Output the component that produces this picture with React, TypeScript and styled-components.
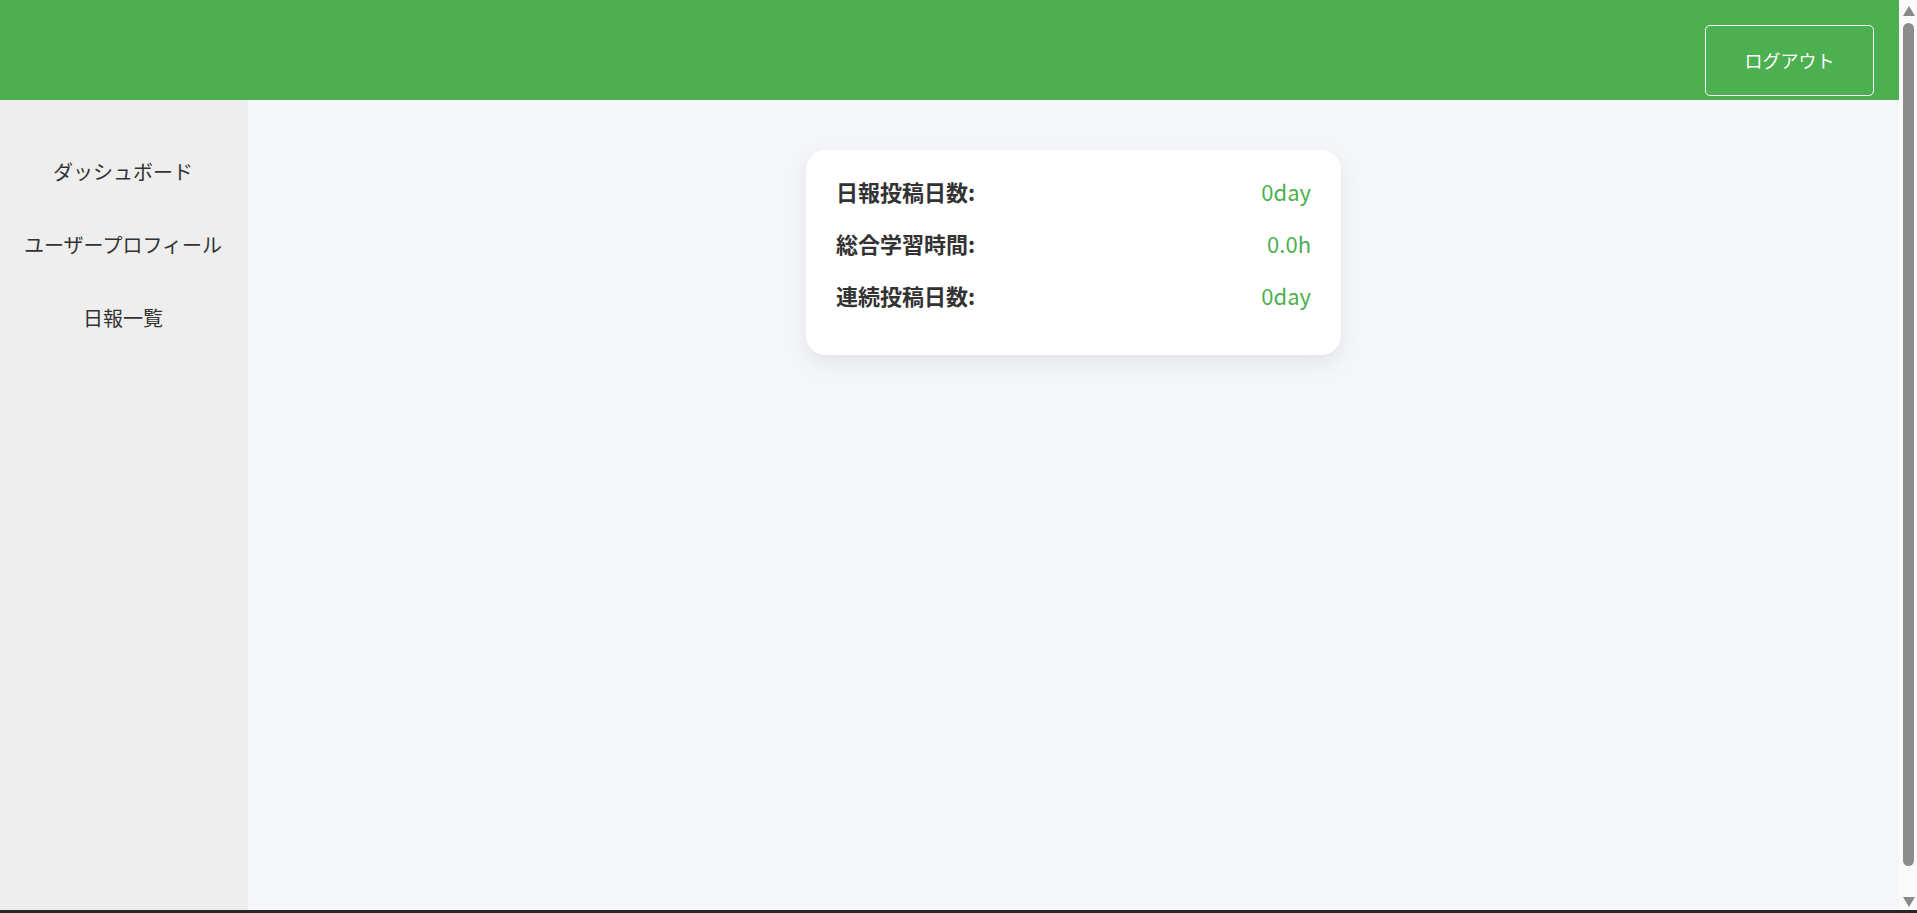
import React from "react";
import styled, { createGlobalStyle } from "styled-components";

const GlobalStyle = createGlobalStyle`
  html, body {
    margin: 0;
    padding: 0;
    height: 100%;
    overflow: hidden;
  }
  body {
    font-family: "Noto Sans CJK JP", "Noto Sans", sans-serif;
    color: #333;
  }
  * { box-sizing: border-box; }
`;

const Frame = styled.div`
  height: 100vh;
  display: flex;
  flex-direction: column;
  border-bottom: 3px solid #262626;
`;

const Window = styled.div`
  flex: 1;
  min-height: 0;
  display: flex;
`;

const Content = styled.div`
  flex: 1;
  min-width: 0;
  overflow: hidden;
  display: flex;
  flex-direction: column;
`;

const Rail = styled.div`
  width: 18px;
  flex-shrink: 0;
  background: #fafafa;
  display: flex;
  flex-direction: column;
  align-items: center;
  padding: 6px 0 3px 1px;
`;

const Arrow = styled.div<{ $down?: boolean }>`
  width: 0;
  height: 0;
  border-left: 6.5px solid transparent;
  border-right: 6.5px solid transparent;
  ${(p) =>
    p.$down
      ? "border-top: 10px solid #8a8a8a;"
      : "border-bottom: 10px solid #8a8a8a;"}
`;

const Thumb = styled.div`
  width: 11px;
  flex: 1;
  margin: 7px 0 31px;
  background: #8c8c8c;
  border-radius: 6px;
`;

const Header = styled.header`
  height: 100px;
  flex-shrink: 0;
  background: #4caf50;
  display: flex;
  justify-content: flex-end;
  align-items: flex-start;
  padding: 25px 25px 0 0;
`;

const LogoutButton = styled.button`
  font-family: inherit;
  font-size: 18px;
  line-height: 25px;
  color: #fff;
  background: transparent;
  border: 1px solid #fff;
  border-radius: 5px;
  width: 169px;
  height: 71px;
  cursor: pointer;
`;

const Body = styled.div`
  flex: 1;
  display: flex;
  min-height: 850px;
`;

const Sidebar = styled.nav`
  width: 248px;
  flex-shrink: 0;
  background: #eeeeee;
  padding-top: 35px;
  display: flex;
  flex-direction: column;
`;

const NavItem = styled.a`
  height: 73px;
  display: flex;
  align-items: center;
  justify-content: center;
  font-size: 20px;
  color: #333;
  text-decoration: none;
  padding-right: 2px;
`;

const Main = styled.main`
  flex: 1;
  background: #f5f6fa;
  display: flex;
  justify-content: center;
  align-items: flex-start;
  padding-top: 50px;
`;

const Card = styled.section`
  width: 535px;
  background: #fff;
  border-radius: 20px;
  padding: 23px 30px 26px;
  box-shadow: 0 8px 22px rgba(0, 0, 0, 0.08);
`;

const StatRow = styled.div`
  height: 36px;
  margin-bottom: 16px;
  display: flex;
  justify-content: space-between;
  align-items: center;
  font-size: 22px;
`;

const StatLabel = styled.span`
  font-weight: 700;
  color: #333;
`;

const StatValue = styled.span`
  color: #4caf50;
`;

const stats = [
  { label: "日報投稿日数:", value: "0day" },
  { label: "総合学習時間:", value: "0.0h" },
  { label: "連続投稿日数:", value: "0day" },
];

export default function App() {
  return (
    <Frame>
      <GlobalStyle />
      <Window>
        <Content>
          <Header>
            <LogoutButton>ログアウト</LogoutButton>
          </Header>
          <Body>
            <Sidebar>
              <NavItem href="#">ダッシュボード</NavItem>
              <NavItem href="#">ユーザープロフィール</NavItem>
              <NavItem href="#">日報一覧</NavItem>
            </Sidebar>
            <Main>
              <Card>
                {stats.map((s) => (
                  <StatRow key={s.label}>
                    <StatLabel>{s.label}</StatLabel>
                    <StatValue>{s.value}</StatValue>
                  </StatRow>
                ))}
              </Card>
            </Main>
          </Body>
        </Content>
        <Rail aria-hidden="true">
          <Arrow />
          <Thumb />
          <Arrow $down />
        </Rail>
      </Window>
    </Frame>
  );
}
